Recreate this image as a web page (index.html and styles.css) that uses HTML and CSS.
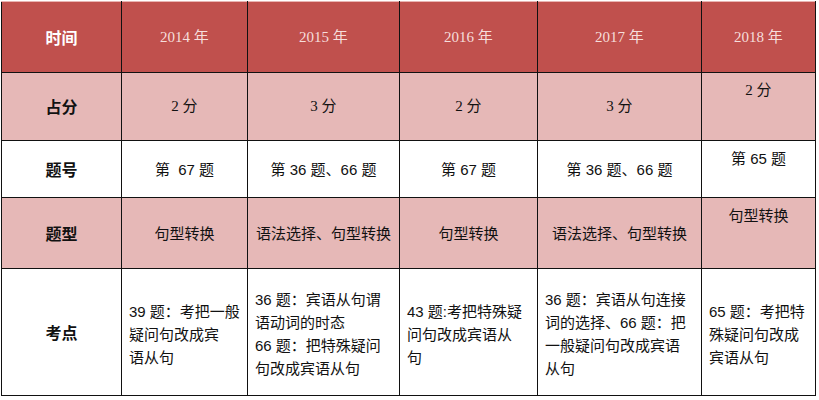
FILE: index.html
```html
<!DOCTYPE html>
<html lang="zh">
<head>
<meta charset="utf-8">
<title>考点表</title>
<link rel="stylesheet" href="styles.css">
</head>
<body>
<table class="grid">
  <colgroup>
    <col class="c1"><col class="c2"><col class="c3"><col class="c4"><col class="c5"><col class="c6">
  </colgroup>
  <tr class="head">
    <th class="label">时间</th>
    <th class="year">2014 年</th>
    <th class="year">2015 年</th>
    <th class="year">2016 年</th>
    <th class="year">2017 年</th>
    <th class="year">2018 年</th>
  </tr>
  <tr class="pink r2">
    <td class="label">占分</td>
    <td class="serif">2 分</td>
    <td class="serif">3 分</td>
    <td class="serif">2 分</td>
    <td class="serif">3 分</td>
    <td class="serif top">2 分</td>
  </tr>
  <tr class="white r3">
    <td class="label">题号</td>
    <td>第 &nbsp;67 题</td>
    <td>第 36 题、66 题</td>
    <td>第 67 题</td>
    <td>第 36 题、66 题</td>
    <td class="top">第 65 题</td>
  </tr>
  <tr class="pink r4">
    <td class="label">题型</td>
    <td>句型转换</td>
    <td>语法选择、句型转换</td>
    <td>句型转换</td>
    <td>语法选择、句型转换</td>
    <td class="top">句型转换</td>
  </tr>
  <tr class="white r5">
    <td class="label">考点</td>
    <td class="text">39 题：考把一般<br>疑问句改成宾<br>语从句</td>
    <td class="text">36 题：宾语从句谓<br>语动词的时态<br>66 题：把特殊疑问<br>句改成宾语从句</td>
    <td class="text">43 题:考把特殊疑<br>问句改成宾语从<br>句</td>
    <td class="text">36 题：宾语从句连接<br>词的选择、66 题：把<br>一般疑问句改成宾语<br>从句</td>
    <td class="text">65 题：考把特<br>殊疑问句改成<br>宾语从句</td>
  </tr>
</table>
</body>
</html>
```

FILE: styles.css
```css
html, body {
  margin: 0;
  padding: 0;
  background: #ffffff;
}

body {
  padding: 1px 0 0 1px;
  font-family: "Liberation Sans", "Noto Sans CJK SC", sans-serif;
  font-size: 15px;
  color: #111111;
}

.grid {
  border-collapse: collapse;
  table-layout: fixed;
  width: 814px;
  border: 1px solid #4a3838;
}

.c1 { width: 120px; }
.c2 { width: 126px; }
.c3 { width: 152px; }
.c4 { width: 138px; }
.c5 { width: 164px; }
.c6 { width: 114px; }

.grid th,
.grid td {
  border: 1px solid #111111;
  padding: 0;
  text-align: center;
  vertical-align: middle;
  line-height: 23px;
  white-space: nowrap;
  font-weight: normal;
  overflow: visible;
}

.head th {
  background: #c0504d;
  height: 70px;
  border-top: 1px solid #e9b4b2;
}

.head .year {
  font-family: "Liberation Serif", "Noto Sans CJK SC", serif;
  font-size: 15px;
  color: #f6dedc;
}

.head .label {
  color: #ffffff;
}

.label {
  font-family: "Noto Sans CJK SC", sans-serif;
  font-weight: bold !important;
  font-size: 16px;
}

.pink td { background: #e6b8b7; }
.white td { background: #ffffff; }

.r2 td { height: 67px; }
.r3 td { height: 56px; }
.r4 td { height: 70px; }
.r5 td { height: 126px; }

.serif {
  font-family: "Liberation Serif", "Noto Sans CJK SC", serif;
}

.grid td.top {
  vertical-align: top;
  padding-top: 6px;
}

.r2 td.top { height: 61px; }
.r3 td.top { height: 50px; }
.r4 td.top { height: 64px; }

.grid td.text {
  text-align: left;
  height: 122px;
  padding: 4px 0 0 7px;
}
```
